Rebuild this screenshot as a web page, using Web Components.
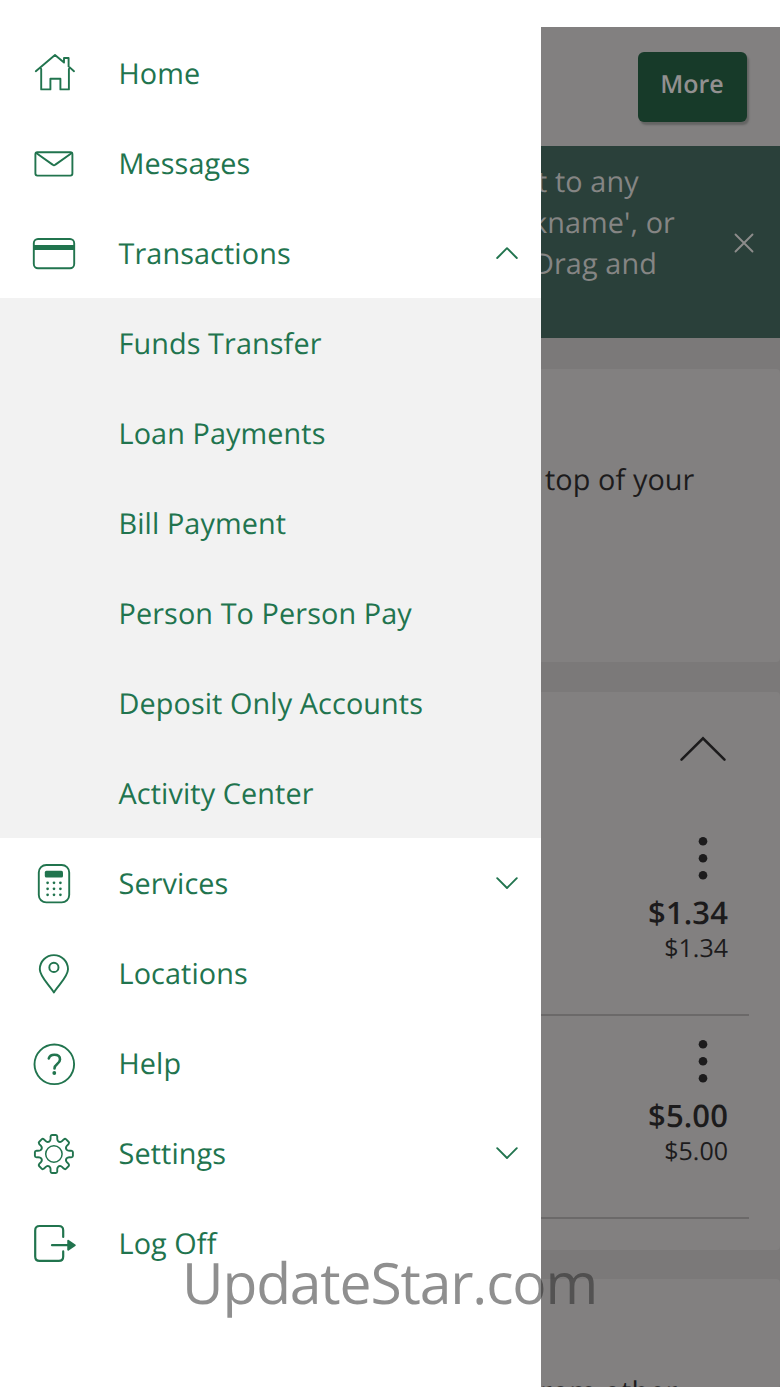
<!DOCTYPE html>
<html lang="en">
<head>
<meta charset="UTF-8">
<title>Accounts</title>
<style>
    body {
        margin: 0;
        background: #fff;
        font-family: "Open Sans", "Noto Sans", sans-serif;
        text-rendering: geometricPrecision;
    }
</style>
</head>
<body>
<app-shell>
    <nav-drawer slot="drawer">
        <nav-item icon="home">Home</nav-item>
        <nav-item icon="mail">Messages</nav-item>
        <nav-item icon="card" toggle="up">Transactions</nav-item>
        <nav-group>
            <nav-item>Funds Transfer</nav-item>
            <nav-item>Loan Payments</nav-item>
            <nav-item>Bill Payment</nav-item>
            <nav-item>Person To Person Pay</nav-item>
            <nav-item>Deposit Only Accounts</nav-item>
            <nav-item>Activity Center</nav-item>
        </nav-group>
        <nav-item icon="calculator" toggle="down">Services</nav-item>
        <nav-item icon="pin">Locations</nav-item>
        <nav-item icon="help">Help</nav-item>
        <nav-item icon="gear" toggle="down">Settings</nav-item>
        <nav-item icon="logout">Log Off</nav-item>
    </nav-drawer>
    <top-bar>More</top-bar>
    <tip-banner>
        <div style="margin-left:-4px">t to any</div>
        <div style="margin-left:-9px">kname', or</div>
        <div style="margin-left:-8px">Drag and</div>
    </tip-banner>
    <page-card style="height:293px">
        <card-text style="padding:91px 0 0 4px">top of your</card-text>
    </page-card>
    <page-card style="height:558px">
        <collapse-toggle></collapse-toggle>
        <account-row balance="$1.34" available="$1.34"></account-row>
        <account-row balance="$5.00" available="$5.00"></account-row>
    </page-card>
    <page-card style="height:109px">
        <card-text style="margin-left:-1px;padding-top:93px">rom other</card-text>
    </page-card>
    <water-mark slot="mark">UpdateStar.com</water-mark>
</app-shell>

<script>
const ICONS = {
    home: `<path d="M35.8 71.2 55 55l9 7.6V58h4.6v8.4l5.4 4.8M41.2 69v20.4h9.2V78.8h10v10.6h8.5V69"/>`,
    mail: `<rect x="35.4" y="62.2" width="37" height="23.4" rx="2"/><path d="M36.2 63 52.6 74.6Q54 75.8 55.4 74.6L71.8 63"/>`,
    card: `<rect x="33.8" y="59" width="40.4" height="29.2" rx="4.2"/><path d="M34 67.6h40" stroke-width="5" stroke-linecap="butt"/>`,
    calculator: `<rect x="38.8" y="55" width="30.4" height="37.4" rx="7.5"/><rect x="44.8" y="60.8" width="18.2" height="6.8" rx="1.6" fill="currentColor" stroke="none"/>
        <g fill="currentColor" stroke="none"><circle cx="47.6" cy="72.8" r="1.35"/><circle cx="54" cy="72.8" r="1.35"/><circle cx="60.4" cy="72.8" r="1.35"/><circle cx="47.6" cy="78.8" r="1.35"/><circle cx="54" cy="78.8" r="1.35"/><circle cx="60.4" cy="78.8" r="1.35"/><circle cx="47.6" cy="84.8" r="1.35"/><circle cx="54" cy="84.8" r="1.35"/><circle cx="60.4" cy="84.8" r="1.35"/></g>`,
    pin: `<path d="M53.9 92.4C49 84.6 39.8 76.6 39.8 69.2a14.1 14.1 0 0 1 28.2 0C68 76.6 58.8 84.6 53.9 92.4z"/><circle cx="53.9" cy="67.4" r="4.6"/>`,
    help: `<circle cx="54.3" cy="74.3" r="19.8"/><path d="M48.8 68.4c.8-2.4 2.8-3.6 5.5-3.6 3.5 0 5.7 1.7 5.7 4.6 0 4.8-5.5 4.4-5.5 9" stroke-width="2.6"/><circle cx="54.3" cy="83" r="1.9" fill="currentColor" stroke="none"/>`,
    logout: `<path d="M63.2 67V60.4q0-4.4-4.4-4.4H39.6q-4.4 0-4.4 4.4v26q0 4.4 4.4 4.4h19.2q4.4 0 4.4-4.4v-5" stroke-width="2.2"/><path d="M52 75.2h17" stroke-width="2.2"/><path d="M68.2 70.8 74.8 75.2 68.2 79.8z" fill="currentColor"/>`
};

// eight rounded teeth around the hub
ICONS.gear = (() => {
    let d = '';
    for (let i = 0; i < 8; i++) {
        const p = (r, deg) => {
            const a = (i * 45 - 90 + deg) * Math.PI / 180;
            return (53.9 + r * Math.cos(a)).toFixed(2) + ' ' + (74 + r * Math.sin(a)).toFixed(2);
        };
        d += (i ? 'L' : 'M') + p(14, -15.5) + 'Q' + p(15, -12) + ' ' + p(17.6, -11)
            + 'Q' + p(19.2, -9.5) + ' ' + p(19.1, -6) + 'L' + p(19.1, 6)
            + 'Q' + p(19.2, 9.5) + ' ' + p(17.6, 11) + 'Q' + p(15, 12) + ' ' + p(14, 15.5)
            + 'Q' + p(12.6, 22.5) + ' ' + p(14, 29.5);
    }
    return `<path d="${d}z"/><circle cx="53.9" cy="74" r="8.2" stroke-width="1.5"/>`;
})();

class AppShell extends HTMLElement {
    connectedCallback() {
        this.attachShadow({ mode: 'open' }).innerHTML = `
            <style>
                :host {
                    position: relative;
                    display: grid;
                    grid-template-columns: 541px 239px;
                    width: 780px;
                    height: 1387px;
                    overflow: hidden;
                }
                main {
                    display: flex;
                    flex-direction: column;
                    min-width: 0;
                    height: 1360px;
                    margin-top: 27px;
                    overflow: hidden;
                    background: #7b7979;
                }
            </style>
            <slot name="drawer"></slot>
            <main><slot></slot></main>
            <slot name="mark"></slot>
        `;
    }
}

class NavDrawer extends HTMLElement {
    connectedCallback() {
        this.attachShadow({ mode: 'open' }).innerHTML = `
            <style>
                :host {
                    display: flex;
                    flex-direction: column;
                    box-sizing: border-box;
                    padding-top: 27.5px;
                    background: #fff;
                }
            </style>
            <slot></slot>
        `;
    }
}

class NavGroup extends HTMLElement {
    connectedCallback() {
        this.attachShadow({ mode: 'open' }).innerHTML = `
            <style>
                :host { display: block; background: #f2f2f2; }
            </style>
            <slot></slot>
        `;
    }
}

class NavItem extends HTMLElement {
    connectedCallback() {
        const icon = ICONS[this.getAttribute('icon')] || '';
        const toggle = this.getAttribute('toggle');
        const arrow = toggle === 'up' ? 'M2.2 13 12 3.2 21.8 13' : 'M2.2 3.2 12 13 21.8 3.2';

        this.attachShadow({ mode: 'open' }).innerHTML = `
            <style>
                :host {
                    display: flex;
                    align-items: center;
                    height: 90.05px;
                    color: #21744e;
                    font-size: 28.8px;
                    letter-spacing: 0.1px;
                }
                svg {
                    fill: none;
                    stroke: currentColor;
                    stroke-linecap: round;
                    stroke-linejoin: round;
                }
                .icon { width: 118.5px; height: 90px; stroke-width: 1.9; }
                .label { flex: 1; margin-top: 1px; white-space: nowrap; }
                .arrow { width: 24px; height: 16px; margin-right: 22px; stroke-width: 1.9; }
            </style>
            <svg class="icon" viewBox="0 28 118 90" preserveAspectRatio="xMinYMid">${icon}</svg>
            <span class="label"><slot></slot></span>
            ${toggle ? `<svg class="arrow" viewBox="0 0 24 16"><path d="${arrow}"/></svg>` : ''}
        `;
    }
}

class TopBar extends HTMLElement {
    connectedCallback() {
        this.attachShadow({ mode: 'open' }).innerHTML = `
            <style>
                :host {
                    display: flex;
                    flex: none;
                    justify-content: flex-end;
                    box-sizing: border-box;
                    height: 119px;
                    padding: 25px 33px 0 0;
                    background: #828080;
                }
                button {
                    width: 109px;
                    height: 70px;
                    padding: 0 1px 6px 0;
                    border: 0;
                    border-radius: 6px;
                    background: #173a29;
                    box-shadow: 2px 3px 2px #646463;
                    color: #929090;
                    font: 600 25px "Open Sans", sans-serif;
                    letter-spacing: 0;
                    text-rendering: inherit;
                }
            </style>
            <button><slot></slot></button>
        `;
    }
}

class TipBanner extends HTMLElement {
    connectedCallback() {
        this.attachShadow({ mode: 'open' }).innerHTML = `
            <style>
                :host {
                    display: flex;
                    flex: none;
                    align-items: center;
                    justify-content: space-between;
                    box-sizing: border-box;
                    height: 192px;
                    margin-bottom: 31px;
                    padding-right: 26px;
                    background: #2a403a;
                    color: #858584;
                    font-size: 28.8px;
                    line-height: 41px;
                    letter-spacing: 0.1px;
                    white-space: nowrap;
                }
                .text { align-self: flex-start; padding-top: 15px; }
                svg { width: 20px; height: 20px; margin-bottom: -1px; stroke: #8d8c8b; stroke-width: 1.9; stroke-linecap: round; }
            </style>
            <div class="text"><slot></slot></div>
            <svg viewBox="0 0 20 20"><path d="M1.5 1.5l17 17M18.5 1.5l-17 17"/></svg>
        `;
    }
}

class PageCard extends HTMLElement {
    connectedCallback() {
        this.attachShadow({ mode: 'open' }).innerHTML = `
            <style>
                :host {
                    display: block;
                    flex: none;
                    margin-bottom: 29.5px;
                    border-radius: 0 4px 4px 0;
                    background: #828080;
                    color: #1c1b1c;
                }
            </style>
            <slot></slot>
        `;
    }
}

class CardText extends HTMLElement {
    connectedCallback() {
        this.attachShadow({ mode: 'open' }).innerHTML = `
            <style>
                :host {
                    display: block;
                    font-size: 28.8px;
                    line-height: 40px;
                    letter-spacing: 0.1px;
                    white-space: nowrap;
                }
            </style>
            <slot></slot>
        `;
    }
}

class CollapseToggle extends HTMLElement {
    connectedCallback() {
        this.attachShadow({ mode: 'open' }).innerHTML = `
            <style>
                :host {
                    display: flex;
                    justify-content: flex-end;
                    box-sizing: border-box;
                    height: 121px;
                    padding: 42.5px 53px 0 0;
                }
                svg { width: 48px; height: 28px; fill: none; stroke: #1c1b1c; stroke-width: 2.6; stroke-linecap: round; }
            </style>
            <svg viewBox="0 0 48 28"><path d="M2.5 25.6 24 4.4 45.5 25.6"/></svg>
        `;
    }
}

class AccountRow extends HTMLElement {
    connectedCallback() {
        this.attachShadow({ mode: 'open' }).innerHTML = `
            <style>
                :host {
                    display: flex;
                    flex-direction: column;
                    align-items: flex-end;
                    box-sizing: border-box;
                    height: 203px;
                    margin-right: 31px;
                    padding: 22px 21px 0 0;
                    border-bottom: 2px solid #6b6969;
                }
                svg { width: 10px; height: 46px; margin: 0.6px 20px 12.4px 0; fill: #1c1b1c; }
                .balance { font-size: 31px; font-weight: 600; line-height: 40px; letter-spacing: 0.1px; }
                .available { font-size: 25px; line-height: 30px; letter-spacing: 0; }
            </style>
            <svg viewBox="0 0 10 46"><circle cx="5" cy="6.3" r="4.3"/><circle cx="5" cy="23.3" r="4.3"/><circle cx="5" cy="40.2" r="4.3"/></svg>
            <div class="balance">${this.getAttribute('balance')}</div>
            <div class="available">${this.getAttribute('available')}</div>
        `;
    }
}

class WaterMark extends HTMLElement {
    connectedCallback() {
        this.attachShadow({ mode: 'open' }).innerHTML = `
            <style>
                :host {
                    position: absolute;
                    left: 182px;
                    top: 1242px;
                    color: rgba(40, 40, 40, 0.52);
                    font-size: 57px;
                    line-height: 80px;
                    letter-spacing: -1.15px;
                    white-space: nowrap;
                }
            </style>
            <slot></slot>
        `;
    }
}

customElements.define('app-shell', AppShell);
customElements.define('nav-drawer', NavDrawer);
customElements.define('nav-group', NavGroup);
customElements.define('nav-item', NavItem);
customElements.define('top-bar', TopBar);
customElements.define('tip-banner', TipBanner);
customElements.define('page-card', PageCard);
customElements.define('card-text', CardText);
customElements.define('collapse-toggle', CollapseToggle);
customElements.define('account-row', AccountRow);
customElements.define('water-mark', WaterMark);
</script>
</body>
</html>
